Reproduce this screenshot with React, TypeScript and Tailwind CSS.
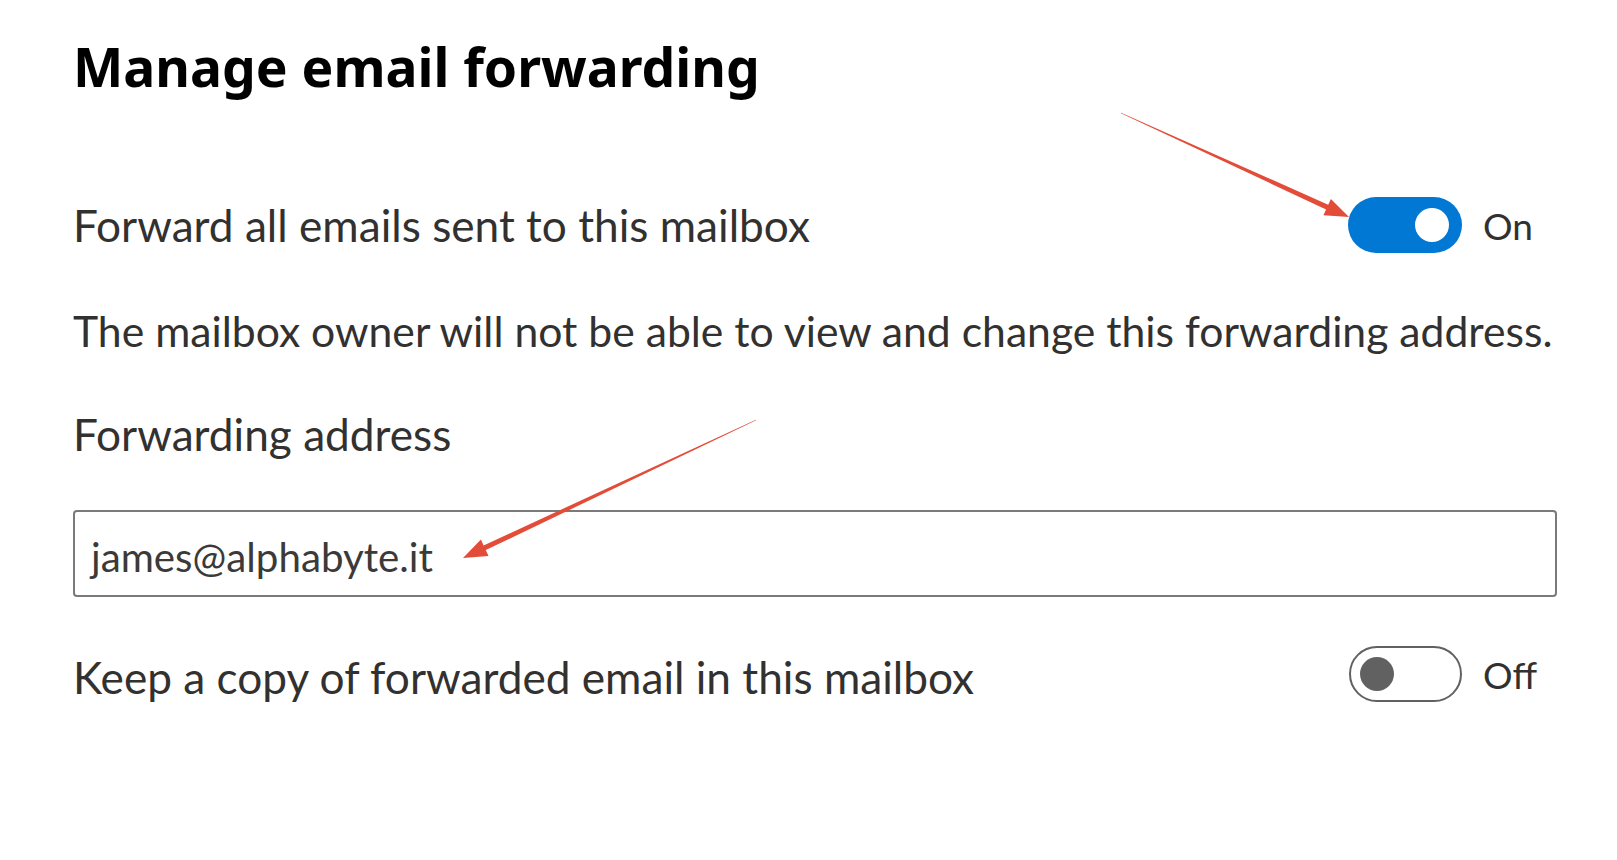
const BODY = { fontFamily: 'Lato, "Open Sans", sans-serif' }
const HEAD = { fontFamily: '"Noto Sans", "Open Sans", sans-serif' }

// tapered annotation arrow, thin at the tail and thick near the head
function arrowPoints(sx: number, sy: number, tx: number, ty: number) {
  const dx = tx - sx
  const dy = ty - sy
  const len = Math.hypot(dx, dy)
  const ux = dx / len
  const uy = dy / len
  const nx = -uy
  const ny = ux
  const head = 24
  const wing = 9
  const shaft = 2.6
  const bx = tx - head * ux
  const by = ty - head * uy
  const pts = [
    [sx + 0.3 * nx, sy + 0.3 * ny],
    [bx + shaft * nx, by + shaft * ny],
    [bx + wing * nx, by + wing * ny],
    [tx, ty],
    [bx - wing * nx, by - wing * ny],
    [bx - shaft * nx, by - shaft * ny],
    [sx - 0.3 * nx, sy - 0.3 * ny],
  ]
  return pts.map(([x, y]) => `${x.toFixed(1)},${y.toFixed(1)}`).join(' ')
}

function Toggle({ on }: { on: boolean }) {
  return (
    <div className="flex items-center gap-[21px]">
      {on ? (
        <div className="w-[114px] h-[56px] rounded-full bg-[#0078d4] flex items-center justify-end pr-[13px]">
          <div className="w-[34px] h-[34px] rounded-full bg-white" />
        </div>
      ) : (
        <div className="w-[113px] h-[56px] rounded-full border-[2.5px] border-[#616161] flex items-center pl-[9px]">
          <div className="w-[34px] h-[34px] rounded-full bg-[#616161]" />
        </div>
      )}
      <span className="w-[74px] text-[37px] leading-none text-[#323130]" style={BODY}>
        {on ? 'On' : 'Off'}
      </span>
    </div>
  )
}

export default function App() {
  return (
    <div className="relative w-[1617px] h-[860px] bg-white overflow-hidden">
      <div className="pt-[40px] pl-[73px] pr-[60px]">
        <h1 className="text-[53.4px] leading-[54px] font-bold text-black" style={HEAD}>
          Manage email forwarding
        </h1>

        <div className="mt-[103px] h-[56px] flex items-center justify-between">
          <span className="text-[44.2px] leading-[56px] text-[#323130]" style={BODY}>
            Forward all emails sent to this mailbox
          </span>
          <Toggle on />
        </div>

        <p className="mt-[52px] text-[42.7px] leading-[52px] text-[#323130] whitespace-nowrap" style={BODY}>
          The mailbox owner will not be able to view and change this forwarding address.
        </p>

        <p className="mt-[51px] text-[44.2px] leading-[52px] text-[#323130]" style={BODY}>
          Forwarding address
        </p>

        <div className="mt-[50px] h-[87px] rounded-[4px] border-2 border-[#7a7a7a] flex items-center pl-[16px] pt-[6px]">
          <span className="text-[40.3px] leading-[48px] text-[#3b3a39]" style={BODY}>
            james@alphabyte.it
          </span>
        </div>

        <div className="mt-[49px] h-[56px] flex items-center justify-between">
          <span className="text-[44.2px] leading-[56px] pt-[5px] text-[#323130]" style={BODY}>
            Keep a copy of forwarded email in this mailbox
          </span>
          <Toggle on={false} />
        </div>
      </div>

      <svg className="absolute inset-0 pointer-events-none" width={1617} height={860}>
        <polygon points={arrowPoints(1121, 113, 1349, 217)} fill="#e24c38" />
        <polygon points={arrowPoints(756, 420, 463, 558)} fill="#e24c38" />
      </svg>
    </div>
  )
}
